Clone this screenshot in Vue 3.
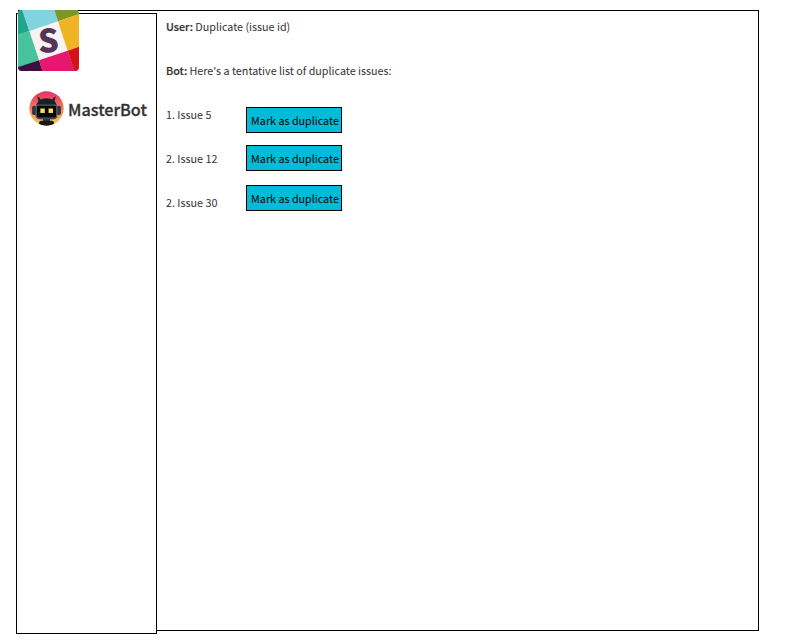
<script setup>
const issues = ['1. Issue 5', '2. Issue 12', '2. Issue 30']
</script>

<template>
  <div class="page">
    <div class="frame">
      <aside class="sidebar">
        <svg class="slack" viewBox="0 0 183 183">
          <defs><clipPath id="tile"><rect width="183" height="183" rx="11" /></clipPath></defs>
          <g clip-path="url(#tile)">
            <rect width="183" height="183" fill="#f6f3f2" />
            <path d="M0 0H14L34 63L0 75Z" fill="#20a58d" />
            <path d="M12 0H109L120 34L34 63Z" fill="#82d3e0" />
            <path d="M109 0H183V13L120 34Z" fill="#7b9922" />
            <path d="M120 34L183 13V110L149 122Z" fill="#eeb424" />
            <path d="M0 73L34 63L63 151L0 172Z" fill="#49c39e" />
            <path d="M0 171L63 151L74 183H0Z" fill="#3c1141" />
            <path d="M63 151L149 122L170 183H73Z" fill="#e5176f" />
            <path d="M149 122L183 110V183H169Z" fill="#d71115" />
          </g>
          <text class="slack-letter" x="91" y="127" text-anchor="middle" transform="rotate(-2 92 92)">S</text>
        </svg>
        <div class="brand">
          <svg class="avatar" viewBox="0 0 102 102">
            <defs>
              <linearGradient id="sun" x1="0" y1="0" x2="0" y2="1">
                <stop offset="0" stop-color="#e52f68" />
                <stop offset=".5" stop-color="#f57b5e" />
                <stop offset="1" stop-color="#fbd05c" />
              </linearGradient>
              <clipPath id="disc"><circle cx="51" cy="51" r="50" /></clipPath>
            </defs>
            <circle cx="51" cy="51" r="50" fill="url(#sun)" />
            <g clip-path="url(#disc)">
              <path d="M24 15L31 20L37 29L29 36ZM78 15L71 20L65 29L73 36Z" fill="#20262c" />
              <path d="M21 45C22 13 80 13 81 45V72Q81 82 71 82H31Q21 82 21 72Z" fill="#1b2024" />
              <rect x="9" y="43" width="12" height="27" rx="5" fill="#30373d" />
              <rect x="81" y="43" width="12" height="27" rx="5" fill="#30373d" />
              <rect x="21" y="41" width="60" height="38" rx="6" fill="#06080a" stroke="#4d5b64" stroke-width="4" />
              <rect x="33" y="51" width="13" height="13" fill="#f9dc61" />
              <rect x="57" y="51" width="13" height="13" fill="#f9dc61" />
              <rect x="41" y="81" width="20" height="9" fill="#30363a" />
              <path d="M29 102V93Q29 87 36 87H66Q73 87 73 93V102Z" fill="#15191c" />
            </g>
          </svg>
          <span class="brand-name">MasterBot</span>
        </div>
      </aside>
      <main class="chat">
        <p class="line user"><b>User:</b> Duplicate (issue id)</p>
        <p class="line bot"><b>Bot:</b> Here's a tentative list of duplicate issues:</p>
        <div class="results">
          <div class="issues">
            <p v-for="issue in issues" :key="issue" class="line">{{ issue }}</p>
          </div>
          <div class="actions">
            <button v-for="issue in issues" :key="issue" class="mark">Mark as duplicate</button>
          </div>
        </div>
      </main>
    </div>
  </div>
</template>

<style>
body { background: #fff; }
</style>

<style scoped>
.page {
  box-sizing: border-box;
  height: 639px;
  padding: 10px 0 0 18px;
}
.frame {
  box-sizing: border-box;
  display: flex;
  width: 741px;
  height: 621px;
  border: 1px solid #000;
  font-family: "Noto Sans CJK SC", "Noto Sans", sans-serif;
  font-size: 10.76px;
  color: #333;
}
.sidebar {
  box-sizing: border-box;
  flex: none;
  width: 141px;
  height: 621px;
  margin: 2px 0 0 -3px;
  border: 1px solid #000;
  background: #fff;
}
.slack {
  display: block;
  width: 61px;
  height: 61px;
  margin: -4px 0 0 1px;
}
.slack-letter {
  font: 900 97px "Noto Sans CJK SC", sans-serif;
  fill: #543459;
}
.brand {
  display: flex;
  align-items: center;
  gap: 4px;
  margin: 20px 0 0 12px;
}
.avatar { flex: none; width: 35px; height: 35px; }
.brand-name {
  font-size: 16.2px;
  font-weight: 500;
  line-height: 34px;
  white-space: nowrap;
  -webkit-text-stroke: 0.3px #333;
}
.chat { padding: 5px 0 0 9px; }
.line {
  height: 22px;
  margin: 0;
  line-height: 22px;
  white-space: nowrap;
}
.line b { font-weight: 500; -webkit-text-stroke: 0.2px #333; }
.bot { margin-top: 22px; }
.results { display: flex; margin-top: 14px; }
.issues {
  display: flex;
  flex-direction: column;
  gap: 22px;
  width: 80px;
  padding-top: 8px;
}
.actions { display: flex; flex-direction: column; padding-top: 11px; }
.mark {
  box-sizing: border-box;
  width: 96px;
  height: 26px;
  padding: 2px 0 0 2px;
  border: 1px solid #000;
  background: #00bcd8;
  color: #000;
  font: inherit;
  line-height: 22px;
  white-space: nowrap;
}
.mark:nth-child(2) { margin-top: 12px; }
.mark:nth-child(3) { margin-top: 14px; }
</style>
